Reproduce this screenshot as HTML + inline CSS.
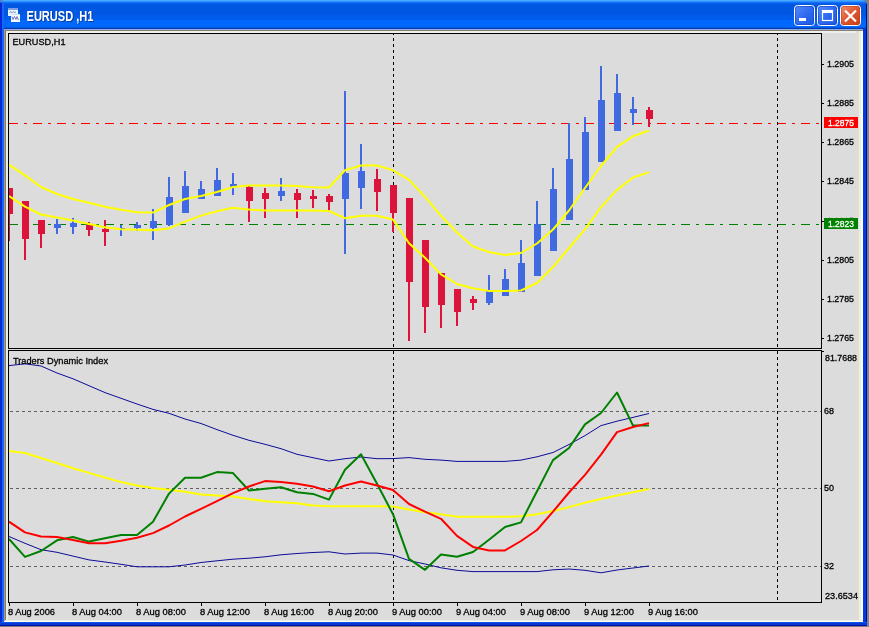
<!DOCTYPE html>
<html><head><meta charset="utf-8"><title>EURUSD,H1</title>
<style>html,body{margin:0;padding:0;background:#808080;overflow:hidden}svg{display:block;will-change:transform}text{font-family:"Liberation Sans",sans-serif}</style>
</head><body>
<svg width="869" height="627" viewBox="0 0 869 627" font-family="Liberation Sans, sans-serif"><rect x="0" y="0" width="869" height="627" fill="#808080"/>
<path d="M0,626 L0,4 Q0,0 4,0 L862,0 Q866.5,0 867,5 L867,626 Z" fill="#0A3FD8"/>
<defs><linearGradient id="tg" x1="0" y1="0" x2="0" y2="1">
<stop offset="0" stop-color="#3D9BFF"/><stop offset="0.04" stop-color="#2C84FF"/><stop offset="0.09" stop-color="#1467F5"/>
<stop offset="0.14" stop-color="#0058E6"/><stop offset="0.3" stop-color="#0052E0"/><stop offset="0.55" stop-color="#0056EA"/>
<stop offset="0.72" stop-color="#0064F8"/><stop offset="0.9" stop-color="#0066FC"/><stop offset="0.96" stop-color="#0056E6"/>
<stop offset="1" stop-color="#0040B8"/></linearGradient>
<linearGradient id="cg" x1="0" y1="0" x2="1" y2="1"><stop offset="0" stop-color="#F09070"/><stop offset="0.5" stop-color="#E05530"/><stop offset="1" stop-color="#C83A10"/></linearGradient>
<linearGradient id="bg2" x1="0" y1="0" x2="1" y2="1"><stop offset="0" stop-color="#5A8CFF"/><stop offset="0.5" stop-color="#2E6BF0"/><stop offset="1" stop-color="#1C56E0"/></linearGradient>
<clipPath id="mc"><rect x="9" y="34" width="812" height="314"/></clipPath>
<clipPath id="ic"><rect x="9" y="351" width="812" height="251"/></clipPath>
</defs>
<clipPath id="tc"><path d="M0,29 L0,4 Q0,0 4,0 L862,0 Q866.5,0 867,5 L867,29 Z"/></clipPath>
<g clip-path="url(#tc)" shape-rendering="crispEdges"><rect x="0" y="0" width="867" height="1" fill="#48A8FF"/><rect x="0" y="1" width="867" height="1" fill="#2C90FF"/><rect x="0" y="2" width="867" height="1" fill="#1270F8"/><rect x="0" y="3" width="867" height="1" fill="#0660EC"/><rect x="0" y="4" width="867" height="11" fill="#0058E2"/><rect x="0" y="15" width="867" height="5" fill="#005CEC"/><rect x="0" y="20" width="867" height="7" fill="#0068FC"/><rect x="0" y="27" width="867" height="1" fill="#0058E4"/><rect x="0" y="28" width="867" height="1" fill="#083CA8"/></g>
<rect x="0" y="3" width="2" height="623" fill="#0828D8"/>
<rect x="2" y="2" width="2" height="621" fill="#1468F4"/>
<rect x="863" y="29" width="3" height="597" fill="#0838D8"/>
<rect x="866" y="4" width="1" height="622" fill="#001070"/>
<rect x="867" y="5" width="1" height="622" fill="#7080C0"/>
<rect x="0" y="622" width="867" height="1" fill="#1050F0"/>
<rect x="0" y="623" width="867" height="2" fill="#0838D0"/>
<rect x="0" y="625" width="867" height="1" fill="#0010A0"/>
<rect x="4" y="29" width="859" height="1" fill="#88AAEE"/>
<rect x="4" y="30" width="859" height="592" fill="#DCDCDC"/>
<rect x="4" y="30" width="859" height="1" fill="#8A8070"/>
<rect x="4" y="31" width="859" height="2" fill="#F0F0EA"/>
<rect x="4" y="30" width="1" height="592" fill="#A89E88"/>
<rect x="5" y="31" width="1" height="590" fill="#807868"/>
<rect x="6" y="31" width="2" height="590" fill="#ECEEEA"/>
<rect x="856" y="31" width="3" height="590" fill="#E0DED4"/>
<rect x="859" y="31" width="2" height="590" fill="#ECEEE8"/>
<rect x="861" y="31" width="2" height="591" fill="#F8FFFF"/>
<rect x="5" y="620" width="858" height="1" fill="#ECEEE0"/>
<rect x="4" y="621" width="859" height="1" fill="#FFFFF2"/>
<rect x="8" y="8" width="10" height="8" fill="#EAF6FF"/>
<rect x="8" y="8" width="10" height="2" fill="#7AA0E0"/>
<polyline points="9.5,12.5 10.5,11.5 11.5,13 13,11.5 14.5,12.5 16,12" fill="none" stroke="#6868B0" stroke-width="0.8"/>
<rect x="11" y="14" width="9" height="8" fill="#F2FAFF"/>
<rect x="11" y="14" width="9" height="1" fill="#C8E0F0"/>
<polyline points="12,16.5 13,19.5 14.5,16.5 16,19.5 17,16.5 18.5,20" fill="none" stroke="#5858A8" stroke-width="0.8"/>
<text x="26.5" y="21" font-size="14.5" font-weight="bold" fill="#0A246A" opacity="0.6" textLength="67" lengthAdjust="spacingAndGlyphs" transform="translate(1,1)">EURUSD ,H1</text>
<text x="26.5" y="21" font-size="14.5" font-weight="bold" fill="#FFFFFF" textLength="67" lengthAdjust="spacingAndGlyphs">EURUSD ,H1</text>
<rect x="794.5" y="5.5" width="20" height="20" rx="3" fill="url(#bg2)" stroke="#FFFFFF" stroke-width="1"/>
<rect x="795.5" y="6.5" width="18" height="18" rx="2" fill="none" stroke="#1A3CB8" stroke-opacity="0.5" stroke-width="1"/>
<rect x="817.5" y="5.5" width="20" height="20" rx="3" fill="url(#bg2)" stroke="#FFFFFF" stroke-width="1"/>
<rect x="818.5" y="6.5" width="18" height="18" rx="2" fill="none" stroke="#1A3CB8" stroke-opacity="0.5" stroke-width="1"/>
<rect x="840.5" y="5.5" width="20" height="20" rx="3" fill="url(#cg)" stroke="#FFFFFF" stroke-width="1"/>
<rect x="841.5" y="6.5" width="18" height="18" rx="2" fill="none" stroke="#B8401A" stroke-opacity="0.5" stroke-width="1"/>
<rect x="799" y="18" width="7" height="3" fill="#FFFFFF"/>
<rect x="822" y="10" width="10" height="10" fill="none" stroke="#FFFFFF" stroke-width="1.2" transform="translate(0.5,0.5)"/>
<rect x="822" y="10" width="11" height="3" fill="#FFFFFF"/>
<path d="M845,10.5 L856,21.5 M856,10.5 L845,21.5" stroke="#FFFFFF" stroke-width="2.2"/>
<g shape-rendering="crispEdges">
<rect x="8" y="33" width="814" height="1" fill="#000"/>
<rect x="8" y="33" width="1" height="316" fill="#000"/>
<rect x="821" y="33" width="1" height="316" fill="#000"/>
<rect x="8" y="348" width="814" height="1" fill="#000"/>
<rect x="8" y="350" width="814" height="1" fill="#000"/>
<rect x="8" y="350" width="1" height="253" fill="#000"/>
<rect x="821" y="350" width="1" height="253" fill="#000"/>
<rect x="8" y="602" width="814" height="1" fill="#000"/>
</g>
<g clip-path="url(#mc)">
<line x1="9" y1="123.5" x2="821" y2="123.5" stroke="#FF0000" stroke-width="1" stroke-dasharray="9,6,3,6" shape-rendering="crispEdges"/>
<line x1="9" y1="224.5" x2="821" y2="224.5" stroke="#008000" stroke-width="1" stroke-dasharray="9,6,3,6" shape-rendering="crispEdges"/>
<line x1="393.5" y1="32" x2="393.5" y2="348" stroke="#000" stroke-width="1" stroke-dasharray="3,3" shape-rendering="crispEdges"/>
<line x1="777.5" y1="32" x2="777.5" y2="348" stroke="#000" stroke-width="1" stroke-dasharray="3,3" shape-rendering="crispEdges"/>
<g shape-rendering="crispEdges">
<rect x="8" y="188" width="2" height="53" fill="#DC143C"/>
<rect x="6" y="188" width="7" height="26" fill="#DC143C"/>
<rect x="24" y="201" width="2" height="59" fill="#DC143C"/>
<rect x="22" y="201" width="7" height="38" fill="#DC143C"/>
<rect x="40" y="220" width="2" height="28" fill="#DC143C"/>
<rect x="38" y="220" width="7" height="14" fill="#DC143C"/>
<rect x="56" y="219" width="2" height="15" fill="#4169E1"/>
<rect x="54" y="224" width="7" height="4" fill="#4169E1"/>
<rect x="72" y="218" width="2" height="16" fill="#4169E1"/>
<rect x="70" y="223" width="7" height="4" fill="#4169E1"/>
<rect x="88" y="222" width="2" height="14" fill="#DC143C"/>
<rect x="86" y="225" width="7" height="5" fill="#DC143C"/>
<rect x="104" y="220" width="2" height="26" fill="#DC143C"/>
<rect x="102" y="229" width="7" height="3" fill="#DC143C"/>
<rect x="120" y="225" width="2" height="11" fill="#4169E1"/>
<rect x="118" y="228" width="7" height="2" fill="#4169E1"/>
<rect x="136" y="222" width="2" height="9" fill="#4169E1"/>
<rect x="134" y="225" width="7" height="3" fill="#4169E1"/>
<rect x="152" y="209" width="2" height="31" fill="#4169E1"/>
<rect x="150" y="221" width="7" height="7" fill="#4169E1"/>
<rect x="168" y="177" width="2" height="49" fill="#4169E1"/>
<rect x="166" y="197" width="7" height="28" fill="#4169E1"/>
<rect x="184" y="171" width="2" height="42" fill="#4169E1"/>
<rect x="182" y="186" width="7" height="27" fill="#4169E1"/>
<rect x="200" y="181" width="2" height="18" fill="#4169E1"/>
<rect x="198" y="189" width="7" height="10" fill="#4169E1"/>
<rect x="216" y="168" width="2" height="28" fill="#4169E1"/>
<rect x="214" y="180" width="7" height="16" fill="#4169E1"/>
<rect x="232" y="173" width="2" height="22" fill="#4169E1"/>
<rect x="230" y="184" width="7" height="3" fill="#4169E1"/>
<rect x="248" y="185" width="2" height="37" fill="#DC143C"/>
<rect x="246" y="187" width="7" height="14" fill="#DC143C"/>
<rect x="264" y="188" width="2" height="30" fill="#DC143C"/>
<rect x="262" y="193" width="7" height="6" fill="#DC143C"/>
<rect x="280" y="178" width="2" height="23" fill="#4169E1"/>
<rect x="278" y="191" width="7" height="5" fill="#4169E1"/>
<rect x="296" y="189" width="2" height="29" fill="#DC143C"/>
<rect x="294" y="193" width="7" height="7" fill="#DC143C"/>
<rect x="312" y="190" width="2" height="18" fill="#DC143C"/>
<rect x="310" y="196" width="7" height="3" fill="#DC143C"/>
<rect x="328" y="194" width="2" height="18" fill="#DC143C"/>
<rect x="326" y="196" width="7" height="6" fill="#DC143C"/>
<rect x="344" y="91" width="2" height="163" fill="#4169E1"/>
<rect x="342" y="173" width="7" height="26" fill="#4169E1"/>
<rect x="360" y="144" width="2" height="65" fill="#4169E1"/>
<rect x="358" y="171" width="7" height="17" fill="#4169E1"/>
<rect x="376" y="169" width="2" height="42" fill="#DC143C"/>
<rect x="374" y="179" width="7" height="13" fill="#DC143C"/>
<rect x="392" y="185" width="2" height="47" fill="#DC143C"/>
<rect x="390" y="185" width="7" height="28" fill="#DC143C"/>
<rect x="408" y="198" width="2" height="143" fill="#DC143C"/>
<rect x="406" y="198" width="7" height="84" fill="#DC143C"/>
<rect x="424" y="240" width="2" height="93" fill="#DC143C"/>
<rect x="422" y="240" width="7" height="67" fill="#DC143C"/>
<rect x="440" y="273" width="2" height="55" fill="#DC143C"/>
<rect x="438" y="273" width="7" height="32" fill="#DC143C"/>
<rect x="456" y="289" width="2" height="37" fill="#DC143C"/>
<rect x="454" y="289" width="7" height="23" fill="#DC143C"/>
<rect x="472" y="296" width="2" height="14" fill="#DC143C"/>
<rect x="470" y="299" width="7" height="4" fill="#DC143C"/>
<rect x="488" y="275" width="2" height="30" fill="#4169E1"/>
<rect x="486" y="290" width="7" height="13" fill="#4169E1"/>
<rect x="504" y="269" width="2" height="27" fill="#4169E1"/>
<rect x="502" y="279" width="7" height="17" fill="#4169E1"/>
<rect x="520" y="240" width="2" height="52" fill="#4169E1"/>
<rect x="518" y="263" width="7" height="29" fill="#4169E1"/>
<rect x="536" y="201" width="2" height="75" fill="#4169E1"/>
<rect x="534" y="224" width="7" height="52" fill="#4169E1"/>
<rect x="552" y="168" width="2" height="83" fill="#4169E1"/>
<rect x="550" y="189" width="7" height="62" fill="#4169E1"/>
<rect x="568" y="123" width="2" height="97" fill="#4169E1"/>
<rect x="566" y="159" width="7" height="61" fill="#4169E1"/>
<rect x="584" y="117" width="2" height="73" fill="#4169E1"/>
<rect x="582" y="132" width="7" height="58" fill="#4169E1"/>
<rect x="600" y="66" width="2" height="96" fill="#4169E1"/>
<rect x="598" y="100" width="7" height="62" fill="#4169E1"/>
<rect x="616" y="74" width="2" height="57" fill="#4169E1"/>
<rect x="614" y="93" width="7" height="38" fill="#4169E1"/>
<rect x="632" y="97" width="2" height="28" fill="#4169E1"/>
<rect x="630" y="109" width="7" height="4" fill="#4169E1"/>
<rect x="648" y="107" width="2" height="20" fill="#DC143C"/>
<rect x="646" y="110" width="7" height="9" fill="#DC143C"/>
</g>
<polyline points="9,164.7 25,175.4 41,187.0 57,194.0 73,199.0 89,202.8 105,206.7 121,209.7 137,212.2 153,212.6 169,205.0 185,199.0 201,196.0 217,192.0 233,187.0 249,185.6 265,185.6 281,185.6 297,186.0 313,187.3 329,187.5 345,170.3 361,165.5 377,165.5 393,170.3 409,179.9 425,196.7 441,215.8 457,232.5 473,246.5 489,252.0 505,255.0 521,253.0 537,243.5 553,229.5 569,210.5 585,188.0 601,166.0 617,146.8 633,136.3 649,130.5" fill="none" stroke="#FFFF00" stroke-width="2" stroke-linejoin="round"/>
<polyline points="9,196.0 25,206.7 41,214.5 57,217.5 73,220.4 89,224.0 105,227.3 121,229.2 137,229.8 153,230.3 169,228.4 185,221.6 201,215.6 217,211.2 233,207.7 249,209.5 265,210.5 281,210.5 297,210.5 313,210.5 329,211.0 345,218.2 361,215.8 377,215.8 393,219.4 409,243.3 425,257.7 441,274.4 457,284.0 473,288.3 489,291.0 505,291.0 521,290.5 537,283.0 553,267.0 569,248.0 585,229.4 601,207.2 617,189.9 633,177.5 649,172.1" fill="none" stroke="#FFFF00" stroke-width="2" stroke-linejoin="round"/>
</g>
<text x="12.5" y="44.6" font-size="9.8" fill="#000" color="#000" textLength="53" lengthAdjust="spacingAndGlyphs" stroke="currentColor" stroke-width="0.3">EURUSD,H1</text>
<g clip-path="url(#ic)">
<line x1="10" y1="411.5" x2="821" y2="411.5" stroke="#606060" stroke-width="1" stroke-dasharray="3,3" shape-rendering="crispEdges"/>
<line x1="10" y1="488.5" x2="821" y2="488.5" stroke="#606060" stroke-width="1" stroke-dasharray="3,3" shape-rendering="crispEdges"/>
<line x1="10" y1="566.5" x2="821" y2="566.5" stroke="#606060" stroke-width="1" stroke-dasharray="3,3" shape-rendering="crispEdges"/>
<line x1="393.5" y1="351" x2="393.5" y2="602" stroke="#000" stroke-width="1" stroke-dasharray="3,3" shape-rendering="crispEdges"/>
<line x1="777.5" y1="351" x2="777.5" y2="602" stroke="#000" stroke-width="1" stroke-dasharray="3,3" shape-rendering="crispEdges"/>
<polyline points="9,365.6 25,363.8 41,366.0 57,373.0 73,378.8 89,385.7 105,392.6 121,398.3 137,404.0 153,409.4 169,413.3 185,419.0 201,423.5 217,429.6 233,435.3 249,440.3 265,444.3 281,448.7 297,454.3 313,457.7 329,461.0 345,458.7 361,457.0 377,458.7 393,458.6 409,457.6 425,459.3 441,460.1 457,461.4 473,461.4 489,461.4 505,461.4 521,460.1 537,456.8 553,452.5 569,444.5 585,435.6 601,425.6 617,421.2 633,417.4 649,413.5" fill="none" stroke="#0C0C98" stroke-width="1"/>
<polyline points="9,536.5 25,543.3 41,549.7 57,552.3 73,556.1 89,559.9 105,562.0 121,564.3 137,566.8 153,566.8 169,566.8 185,565.0 201,562.5 217,560.8 233,559.2 249,558.2 265,556.8 281,554.8 297,553.5 313,552.5 329,551.8 345,554.0 361,553.1 377,553.1 393,555.0 409,560.6 425,564.0 441,567.8 457,570.3 473,571.6 489,571.6 505,571.6 521,571.6 537,571.6 553,569.8 569,569.0 585,570.3 601,572.8 617,570.0 633,568.0 649,566.0" fill="none" stroke="#0C0C98" stroke-width="1"/>
<polyline points="9,451.0 25,453.0 41,458.0 57,463.0 73,468.2 89,472.9 105,477.5 121,482.1 137,485.4 153,488.0 169,489.8 185,491.8 201,494.5 217,495.5 233,496.5 249,498.9 265,501.2 281,502.2 297,503.2 313,505.6 329,506.3 345,506.3 361,506.3 377,506.3 393,506.6 409,509.6 425,512.2 441,514.2 457,516.8 473,516.8 489,516.8 505,516.8 521,516.2 537,514.2 553,511.1 569,507.1 585,502.7 601,499.0 617,495.5 633,492.3 649,489.0" fill="none" stroke="#FFFF00" stroke-width="2" stroke-linejoin="round"/>
<polyline points="9,539.0 25,556.9 41,551.0 57,540.3 73,537.0 89,541.6 105,538.2 121,534.9 137,534.9 153,521.7 169,493.6 185,477.8 201,477.8 217,472.1 233,473.1 249,490.5 265,488.8 281,487.2 297,492.2 313,493.9 329,499.6 345,469.8 361,454.3 377,483.8 393,514.2 409,558.9 425,569.8 441,554.5 457,556.8 473,552.0 489,539.7 505,527.0 521,522.4 537,491.2 553,460.1 569,448.0 585,424.4 601,413.0 617,392.5 633,425.6 649,425.6" fill="none" stroke="#008000" stroke-width="2" stroke-linejoin="round"/>
<polyline points="9,521.7 25,532.4 41,536.5 57,537.0 73,540.0 89,543.3 105,543.3 121,540.8 137,537.7 153,533.1 169,525.5 185,516.5 201,508.9 217,501.2 233,493.2 249,486.5 265,481.1 281,482.1 297,483.8 313,486.5 329,491.2 345,485.5 361,481.5 377,485.5 393,490.0 409,504.0 425,511.7 441,518.8 457,535.9 473,546.9 489,550.4 505,550.4 521,541.0 537,530.0 553,511.7 569,492.5 585,474.8 601,454.7 617,432.1 633,427.0 649,423.1" fill="none" stroke="#FF0000" stroke-width="2" stroke-linejoin="round"/>
</g>
<text x="13" y="364" font-size="9.5" fill="#000" color="#000" textLength="95" lengthAdjust="spacingAndGlyphs" stroke="currentColor" stroke-width="0.3">Traders Dynamic Index</text>
<g shape-rendering="crispEdges">
<rect x="822" y="64" width="2" height="1" fill="#000"/>
<rect x="822" y="103" width="2" height="1" fill="#000"/>
<rect x="822" y="142" width="2" height="1" fill="#000"/>
<rect x="822" y="181" width="2" height="1" fill="#000"/>
<rect x="822" y="221" width="2" height="1" fill="#000"/>
<rect x="822" y="260" width="2" height="1" fill="#000"/>
<rect x="822" y="299" width="2" height="1" fill="#000"/>
<rect x="822" y="338" width="2" height="1" fill="#000"/>
</g>
<text x="827" y="66.8" font-size="9.5" fill="#000" color="#000" textLength="27" lengthAdjust="spacingAndGlyphs" stroke="currentColor" stroke-width="0.3">1.2905</text>
<text x="827" y="105.8" font-size="9.5" fill="#000" color="#000" textLength="27" lengthAdjust="spacingAndGlyphs" stroke="currentColor" stroke-width="0.3">1.2885</text>
<text x="827" y="144.8" font-size="9.5" fill="#000" color="#000" textLength="27" lengthAdjust="spacingAndGlyphs" stroke="currentColor" stroke-width="0.3">1.2865</text>
<text x="827" y="183.8" font-size="9.5" fill="#000" color="#000" textLength="27" lengthAdjust="spacingAndGlyphs" stroke="currentColor" stroke-width="0.3">1.2845</text>
<text x="827" y="223.8" font-size="9.5" fill="#000" color="#000" textLength="27" lengthAdjust="spacingAndGlyphs" stroke="currentColor" stroke-width="0.3">1.2825</text>
<text x="827" y="262.8" font-size="9.5" fill="#000" color="#000" textLength="27" lengthAdjust="spacingAndGlyphs" stroke="currentColor" stroke-width="0.3">1.2805</text>
<text x="827" y="301.8" font-size="9.5" fill="#000" color="#000" textLength="27" lengthAdjust="spacingAndGlyphs" stroke="currentColor" stroke-width="0.3">1.2785</text>
<text x="827" y="340.8" font-size="9.5" fill="#000" color="#000" textLength="27" lengthAdjust="spacingAndGlyphs" stroke="currentColor" stroke-width="0.3">1.2765</text>
<rect x="824" y="117" width="34" height="11" fill="#FF0000" shape-rendering="crispEdges"/>
<text x="828" y="126" font-size="9.5" fill="#FFFFFF" color="#FFFFFF" textLength="26" lengthAdjust="spacingAndGlyphs" stroke="currentColor" stroke-width="0.3">1.2875</text>
<rect x="824" y="218" width="34" height="11" fill="#008000" shape-rendering="crispEdges"/>
<text x="828" y="227" font-size="9.5" fill="#F0FFF0" color="#F0FFF0" textLength="26" lengthAdjust="spacingAndGlyphs" stroke="currentColor" stroke-width="0.3">1.2823</text>
<text x="825" y="360.5" font-size="9.5" fill="#000" color="#000" textLength="32" lengthAdjust="spacingAndGlyphs" stroke="currentColor" stroke-width="0.3">81.7688</text>
<rect x="822" y="351" width="2" height="1" fill="#000"/>
<text x="824" y="414" font-size="9.5" fill="#000" color="#000" textLength="10" lengthAdjust="spacingAndGlyphs" stroke="currentColor" stroke-width="0.3">68</text>
<text x="824" y="491" font-size="9.5" fill="#000" color="#000" textLength="10" lengthAdjust="spacingAndGlyphs" stroke="currentColor" stroke-width="0.3">50</text>
<text x="824" y="569" font-size="9.5" fill="#000" color="#000" textLength="10" lengthAdjust="spacingAndGlyphs" stroke="currentColor" stroke-width="0.3">32</text>
<text x="825" y="599" font-size="9.5" fill="#000" color="#000" textLength="33" lengthAdjust="spacingAndGlyphs" stroke="currentColor" stroke-width="0.3">23.6534</text>
<g shape-rendering="crispEdges">
<rect x="9" y="603" width="1" height="3" fill="#000"/>
<rect x="73" y="603" width="1" height="3" fill="#000"/>
<rect x="137" y="603" width="1" height="3" fill="#000"/>
<rect x="201" y="603" width="1" height="3" fill="#000"/>
<rect x="265" y="603" width="1" height="3" fill="#000"/>
<rect x="329" y="603" width="1" height="3" fill="#000"/>
<rect x="393" y="603" width="1" height="3" fill="#000"/>
<rect x="457" y="603" width="1" height="3" fill="#000"/>
<rect x="521" y="603" width="1" height="3" fill="#000"/>
<rect x="585" y="603" width="1" height="3" fill="#000"/>
<rect x="649" y="603" width="1" height="3" fill="#000"/>
</g>
<text x="8" y="615" font-size="9.5" fill="#000" color="#000" textLength="47" lengthAdjust="spacingAndGlyphs" stroke="currentColor" stroke-width="0.3">8 Aug 2006</text>
<text x="72" y="615" font-size="9.5" fill="#000" color="#000" textLength="50" lengthAdjust="spacingAndGlyphs" stroke="currentColor" stroke-width="0.3">8 Aug 04:00</text>
<text x="136" y="615" font-size="9.5" fill="#000" color="#000" textLength="50" lengthAdjust="spacingAndGlyphs" stroke="currentColor" stroke-width="0.3">8 Aug 08:00</text>
<text x="200" y="615" font-size="9.5" fill="#000" color="#000" textLength="50" lengthAdjust="spacingAndGlyphs" stroke="currentColor" stroke-width="0.3">8 Aug 12:00</text>
<text x="264" y="615" font-size="9.5" fill="#000" color="#000" textLength="50" lengthAdjust="spacingAndGlyphs" stroke="currentColor" stroke-width="0.3">8 Aug 16:00</text>
<text x="328" y="615" font-size="9.5" fill="#000" color="#000" textLength="50" lengthAdjust="spacingAndGlyphs" stroke="currentColor" stroke-width="0.3">8 Aug 20:00</text>
<text x="392" y="615" font-size="9.5" fill="#000" color="#000" textLength="50" lengthAdjust="spacingAndGlyphs" stroke="currentColor" stroke-width="0.3">9 Aug 00:00</text>
<text x="456" y="615" font-size="9.5" fill="#000" color="#000" textLength="50" lengthAdjust="spacingAndGlyphs" stroke="currentColor" stroke-width="0.3">9 Aug 04:00</text>
<text x="520" y="615" font-size="9.5" fill="#000" color="#000" textLength="50" lengthAdjust="spacingAndGlyphs" stroke="currentColor" stroke-width="0.3">9 Aug 08:00</text>
<text x="584" y="615" font-size="9.5" fill="#000" color="#000" textLength="50" lengthAdjust="spacingAndGlyphs" stroke="currentColor" stroke-width="0.3">9 Aug 12:00</text>
<text x="648" y="615" font-size="9.5" fill="#000" color="#000" textLength="50" lengthAdjust="spacingAndGlyphs" stroke="currentColor" stroke-width="0.3">9 Aug 16:00</text></svg>
</body></html>
